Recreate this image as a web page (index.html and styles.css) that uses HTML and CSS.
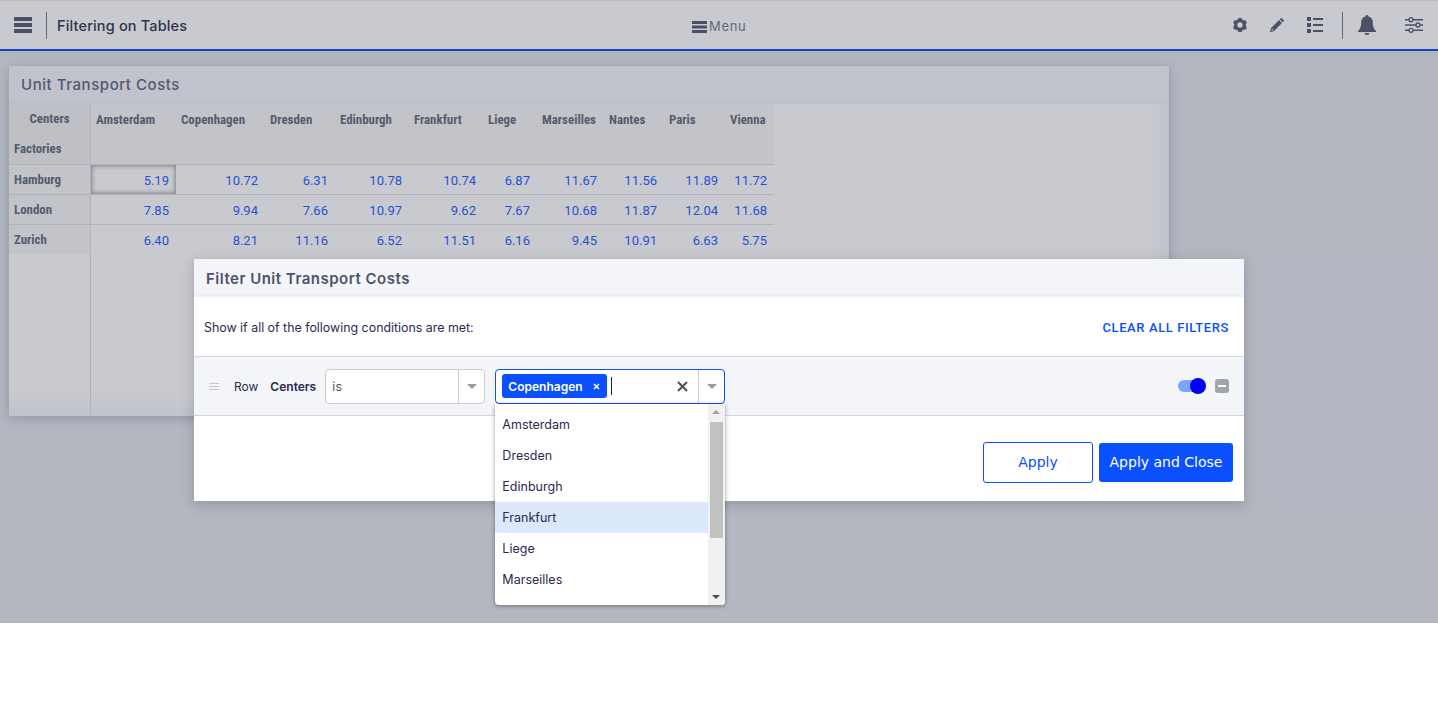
FILE: index.html
```html
<!DOCTYPE html>
<html lang="en">

<head>
    <meta charset="UTF-8">
    <title>Filtering on Tables</title>
    <link rel="stylesheet" href="styles.css">
</head>

<body>
    <div class="app">
        <!-- top bar -->
        <header class="topbar">
            <div class="topbar-left">
                <svg class="icon-bars" width="18" height="16" viewBox="0 0 18 16"><path d="M0 0h18v4H0zM0 6h18v4H0zM0 12h18v4H0z"/></svg>
                <span class="divider"></span>
                <span class="app-title">Filtering on Tables</span>
            </div>
            <div class="topbar-menu">
                <svg width="15" height="12" viewBox="0 0 15 12"><path d="M0 0h15v3H0zM0 4.500h15v3H0zM0 9h15v3H0z"/></svg>
                <span>Menu</span>
            </div>
            <div class="topbar-right">
                <svg class="tool-gear" width="16" height="16" viewBox="0 0 16 16">
                    <circle class="gear-ring" cx="8" cy="8" r="4.300"/>
                    <rect x="6.200" y="1" width="3.600" height="3"/>
                    <rect x="6.200" y="1" width="3.600" height="3" transform="rotate(60 8 8)"/>
                    <rect x="6.200" y="1" width="3.600" height="3" transform="rotate(120 8 8)"/>
                    <rect x="6.200" y="1" width="3.600" height="3" transform="rotate(180 8 8)"/>
                    <rect x="6.200" y="1" width="3.600" height="3" transform="rotate(240 8 8)"/>
                    <rect x="6.200" y="1" width="3.600" height="3" transform="rotate(300 8 8)"/>
                </svg>
                <svg class="tool-pencil" width="16" height="16" viewBox="0 0 16 16"><path d="M12.300.8l2.900 2.900-1.500 1.500-2.900-2.900zM10 3.100L13 6l-8.200 8.200-3.900 1 1-3.900zM3 11.500l-.6 2.200 2.200-.6z"/></svg>
                <svg class="tool-list" width="16" height="16" viewBox="0 0 16 16"><path d="M0 0h4v4H0zM0 6h4v4H0zM0 12h4v4H0zM6 1h10v2H6zM6 7h10v2H6zM6 13h10v2H6z"/></svg>
                <span class="divider"></span>
                <svg class="tool-bell" width="20" height="20" viewBox="0 0 20 20"><path d="M10 0a1.500 1.500 0 0 1 1.500 1.600C14.300 2.300 15.800 4.500 15.800 7.500c0 4.500 1 6.200 3.200 8.500v1H1v-1c2.200-2.300 3.200-4 3.200-8.500 0-3 1.500-5.200 4.300-5.900A1.500 1.500 0 0 1 10 0zM7.500 18h5a2.500 2 0 0 1-5 0z"/></svg>
                <svg class="tool-sliders" width="18" height="16" viewBox="0 0 18 16"><path d="M0 2h4v1.400H0zM8 2h10v1.400H8zM0 7.300h11v1.400H0zM15 7.300h3v1.400h-3zM0 12.600h4v1.400H0zM8 12.600h10v1.400H8z"/><g><circle cx="6" cy="2.700" r="2"/><circle cx="13" cy="8" r="2"/><circle cx="6" cy="13.300" r="2"/></g></svg>
            </div>
        </header>

        <main class="content">
            <section class="panel">
                <h2 class="panel-title">Unit Transport Costs</h2>
                <div class="panel-body">
                    <table class="costs">
                        <colgroup>
                            <col class="w82"><col class="w85"><col class="w89"><col class="w70"><col class="w74"><col class="w74"><col class="w54"><col class="w67"><col class="w60"><col class="w61"><col class="w49">
                        </colgroup>
                        <thead>
                            <tr class="head-top">
                                <th class="corner center">Centers</th>
                                <th>Amsterdam</th><th>Copenhagen</th><th>Dresden</th><th>Edinburgh</th><th>Frankfurt</th><th>Liege</th><th>Marseilles</th><th>Nantes</th><th>Paris</th><th>Vienna</th>
                            </tr>
                            <tr class="head-bottom">
                                <th class="corner">Factories</th>
                                <th colspan="10"></th>
                            </tr>
                        </thead>
                        <tbody>
                            <tr>
                                <th>Hamburg</th>
                                <td class="focused">5.19</td><td>10.72</td><td>6.31</td><td>10.78</td><td>10.74</td><td>6.87</td><td>11.67</td><td>11.56</td><td>11.89</td><td>11.72</td>
                            </tr>
                            <tr>
                                <th>London</th>
                                <td>7.85</td><td>9.94</td><td>7.66</td><td>10.97</td><td>9.62</td><td>7.67</td><td>10.68</td><td>11.87</td><td>12.04</td><td>11.68</td>
                            </tr>
                            <tr>
                                <th>Zurich</th>
                                <td>6.40</td><td>8.21</td><td>11.16</td><td>6.52</td><td>11.51</td><td>6.16</td><td>9.45</td><td>10.91</td><td>6.63</td><td>5.75</td>
                            </tr>
                        </tbody>
                    </table>
                </div>
            </section>
        </main>

        <div class="overlay"></div>

        <!-- filter dialog -->
        <div class="modal">
            <h2 class="modal-title">Filter Unit Transport Costs</h2>
            <div class="modal-intro">
                <span>Show if all of the following conditions are met:</span>
                <a class="clear-all" href="#">CLEAR ALL FILTERS</a>
            </div>
            <div class="condition">
                <svg class="drag" width="10" height="7" viewBox="0 0 10 7"><path d="M0 0h10v1H0zM0 3h10v1H0zM0 6h10v1H0z"/></svg>
                <span class="cond-label">Row</span>
                <strong class="cond-field">Centers</strong>
                <div class="select">
                    <span class="select-value">is</span>
                    <span class="select-arrow"><i class="caret"></i></span>
                </div>
                <div class="multi">
                    <div class="multi-values">
                        <span class="chip">Copenhagen<svg width="7" height="7" viewBox="0 0 7 7"><path d="M1 1l5 5M6 1L1 6"/></svg></span>
                        <span class="text-caret"></span>
                    </div>
                    <svg class="multi-clear" width="11" height="11" viewBox="0 0 11 11"><path d="M1 1l9 9M10 1l-9 9"/></svg>
                    <span class="select-arrow"><i class="caret"></i></span>
                    <div class="dropdown">
                        <ul class="options">
                            <li>Amsterdam</li>
                            <li>Dresden</li>
                            <li>Edinburgh</li>
                            <li class="active">Frankfurt</li>
                            <li>Liege</li>
                            <li>Marseilles</li>
                        </ul>
                        <div class="scrollbar">
                            <i class="scroll-up"></i>
                            <b class="scroll-thumb"></b>
                            <i class="scroll-down"></i>
                        </div>
                    </div>
                </div>
                <span class="toggle"><i></i></span>
                <span class="remove"><i></i></span>
            </div>
            <div class="modal-footer">
                <button class="btn btn-outline">Apply</button>
                <button class="btn btn-primary">Apply and Close</button>
            </div>
        </div>
    </div>
</body>

</html>
```

FILE: styles.css
```css
* {
    margin: 0;
    padding: 0;
    box-sizing: border-box;
}

body {
    background-color: #fff;
    font-family: "Inter", "Liberation Sans", sans-serif;
}

.app {
    position: relative;
    height: 623px;
    overflow: hidden;
    background-color: #e3e6ec;
}

.overlay {
    position: absolute;
    top: 0;
    right: 0;
    bottom: 0;
    left: 0;
    background-color: rgba(30, 35, 55, .24);
}

/* top bar */
.topbar {
    position: relative;
    height: 51px;
    display: flex;
    align-items: center;
    justify-content: space-between;
    background-color: #fff;
    border-top: 1px solid #ececec;
    border-bottom: 2px solid #0a50ff;
    color: #333b50;
}

.topbar svg {
    fill: #5a6073;
    display: block;
}

.divider {
    display: block;
    width: 1px;
    height: 27px;
    background-color: #7a7f8e;
}

.topbar-left {
    display: flex;
    align-items: center;
    padding-left: 14px;
}

.topbar-left .divider {
    margin: 0 10px 0 14px;
}

.app-title {
    font-size: 14.500px;
    font-weight: 500;
    letter-spacing: .15px;
}

.topbar-menu {
    position: absolute;
    left: 692px;
    top: 19px;
    display: flex;
    align-items: center;
    gap: 2px;
    font-size: 13px;
    letter-spacing: .7px;
    color: #7a7f8e;
}

.topbar-menu span {
    margin-top: -2px;
}

.topbar-right {
    display: flex;
    align-items: center;
    padding-right: 15px;
}

.tool-gear {
    margin-right: 21px;
}

.topbar svg .gear-ring {
    fill: none;
    stroke: #5a6073;
    stroke-width: 3.200;
}

.tool-pencil {
    margin-right: 22px;
}

.tool-list {
    margin-right: 19px;
}

.tool-bell {
    margin: 0 28px 0 14px;
}

.tool-sliders circle {
    stroke: #5a6073;
    stroke-width: 1.300;
    fill: none;
}

/* background panel */
.content {
    padding: 15px 9px;
}

.panel {
    width: 1160px;
    height: 350px;
    display: flex;
    flex-direction: column;
    background-color: #fff;
    box-shadow: 0 2px 10px rgba(40, 45, 70, .25);
}

.panel-title {
    height: 38px;
    padding: 9px 12px 0;
    background-color: #f3f6fc;
    border-bottom: 3px solid #edf0f6;
    font-size: 15px;
    font-weight: 500;
    letter-spacing: .55px;
    color: #656c80;
}

.panel-body {
    flex: 1;
    background:
        linear-gradient(#dfe1e7, #dfe1e7) 81px 0 / 1px 100% no-repeat,
        linear-gradient(to bottom, rgba(243, 246, 252, 0), #f3f6fc) 0 100% / 100% 22px no-repeat,
        linear-gradient(to right, rgba(243, 246, 252, 0), #f3f6fc) 100% 0 / 20px 100% no-repeat,
        #fff;
}

.costs {
    width: 765px;
    table-layout: fixed;
    border-collapse: separate;
    border-spacing: 0;
}

.w82 { width: 82px; }
.w85 { width: 85px; }
.w89 { width: 89px; }
.w70 { width: 70px; }
.w74 { width: 74px; }
.w54 { width: 54px; }
.w67 { width: 67px; }
.w60 { width: 60px; }
.w61 { width: 61px; }
.w49 { width: 49px; }

.costs th {
    font-family: "Roboto", sans-serif;
    font-stretch: 75%;
    font-size: 12.900px;
    font-weight: 700;
    text-align: left;
    color: #686f80;
    background-color: #f7f7f7;
    padding: 0 5px;
    white-space: nowrap;
}

.costs .corner {
    background-color: #f2f2f2;
    border-right: 1px solid #dfe1e7;
    padding-bottom: 2px;
}

.costs .center {
    text-align: center;
}

.head-top th {
    height: 31px;
}

.head-bottom th {
    height: 30px;
    border-bottom: 1px solid #dfe1e7;
}

.costs tbody tr {
    height: 30px;
}

.costs tbody tr:last-child {
    height: 29px;
}

.costs tbody th,
.costs td {
    border-bottom: 1px solid #dfe1e7;
}

.costs tbody tr:last-child th,
.costs tbody tr:last-child td {
    border-bottom: 0;
}

.costs tbody th {
    border-right: 1px solid #dfe1e7;
}

.costs td {
    font-family: "Roboto", sans-serif;
    font-size: 13px;
    text-align: right;
    padding: 2px 7px 0 0;
    color: #2a62ff;
}

.costs .focused {
    box-shadow: inset 0 0 4px 1px rgba(60, 60, 70, .5);
}

/* dialog */
.modal {
    position: absolute;
    left: 194px;
    top: 259px;
    width: 1050px;
    height: 242px;
    background-color: #fff;
    box-shadow: 0 3px 12px rgba(40, 45, 70, .25);
}

.modal-title {
    height: 38px;
    padding: 10px 12px 0;
    background-color: #f3f5f9;
    border-bottom: 3px solid #eef0f4;
    font-size: 15px;
    font-weight: 600;
    letter-spacing: .5px;
    color: #4c5368;
}

.modal-intro {
    height: 59px;
    display: flex;
    align-items: center;
    justify-content: space-between;
    padding: 2px 15px 0 10px;
    font-size: 12.400px;
    color: #2b2a50;
}

.clear-all {
    font-family: "Roboto", sans-serif;
    font-size: 13px;
    font-weight: 500;
    letter-spacing: .6px;
    color: #0a50ff;
    text-decoration: none;
}

.condition {
    height: 60px;
    display: flex;
    align-items: center;
    padding: 0 15px;
    background-color: #f3f5f9;
    border-top: 1px solid #d5d6db;
    border-bottom: 1px solid #d5d6db;
    font-size: 12px;
    color: #2b2a50;
}

.drag {
    fill: #c4c6cc;
    margin-right: 15px;
}

.cond-label {
    margin-right: 12px;
}

.cond-field {
    font-weight: 600;
    width: 55px;
}

.select,
.multi {
    height: 35px;
    display: flex;
    align-items: stretch;
    background-color: #fff;
    border-radius: 4px;
}

.select {
    width: 160px;
    border: 1px solid #ccc;
    margin-right: 10px;
}

.select-value {
    flex: 1;
    align-self: center;
    padding: 1px 0 0 6px;
    font-size: 12.500px;
    color: #555;
}

.select-arrow {
    width: 26px;
    display: flex;
    align-items: center;
    justify-content: center;
    border-left: 1px solid #ccc;
}

.caret {
    width: 0;
    height: 0;
    border-left: 5px solid transparent;
    border-right: 5px solid transparent;
    border-top: 5px solid #999;
}

.multi {
    position: relative;
    width: 230px;
    border: 1px solid #0a50ff;
}

.multi-values {
    flex: 1;
    display: flex;
    align-items: center;
    padding-left: 6px;
}

.chip {
    width: 105px;
    height: 24px;
    display: flex;
    align-items: center;
    justify-content: space-between;
    padding: 0 7px 0 6px;
    background-color: #0a50ff;
    border-radius: 3px;
    font-size: 12px;
    font-weight: 600;
    color: #fff;
}

.chip svg {
    stroke: #fff;
    stroke-width: 1.500;
}

.text-caret {
    width: 1px;
    height: 18px;
    margin-left: 4px;
    background-color: #222;
}

.multi-clear {
    align-self: center;
    margin-right: 10px;
    stroke: #555;
    stroke-width: 2.200;
}

.dropdown {
    position: absolute;
    left: -1px;
    top: 34px;
    width: 230px;
    height: 201px;
    display: flex;
    background-color: #fff;
    border-radius: 0 0 4px 4px;
    box-shadow: 0 1px 4px rgba(0, 0, 0, .4);
    overflow: hidden;
}

.options {
    flex: 1;
    list-style: none;
    padding-top: 5px;
}

.options li {
    height: 31px;
    line-height: 31px;
    padding-left: 7px;
    font-size: 12.500px;
    color: #2b2a50;
}

.options .active {
    background-color: #dce9fd;
}

.scrollbar {
    width: 17px;
    position: relative;
    background-color: #f1f1f1;
}

.scroll-thumb {
    position: absolute;
    left: 2px;
    top: 18px;
    width: 13px;
    height: 116px;
    background-color: #c1c1c1;
}

.scroll-up,
.scroll-down {
    position: absolute;
    left: 4px;
    width: 0;
    height: 0;
    border-left: 4px solid transparent;
    border-right: 4px solid transparent;
}

.scroll-up {
    top: 6px;
    border-bottom: 4px solid #a3a3a3;
}

.scroll-down {
    bottom: 6px;
    border-top: 4px solid #505050;
}

.toggle {
    position: relative;
    width: 27px;
    height: 12px;
    margin-left: auto;
    margin-right: 10px;
    background-color: #7fa4ff;
    border-radius: 6px;
}

.toggle i {
    position: absolute;
    right: -1px;
    top: -2px;
    width: 16px;
    height: 16px;
    background-color: #0000f5;
    border-radius: 50%;
}

.remove {
    width: 14px;
    height: 14px;
    display: flex;
    align-items: center;
    justify-content: center;
    background-color: #a3a5ad;
    border-radius: 3px;
}

.remove i {
    width: 8px;
    height: 2px;
    background-color: #fff;
}

.modal-footer {
    height: 85px;
    display: flex;
    align-items: center;
    justify-content: flex-end;
    gap: 6px;
    padding: 7px 11px 0 0;
}

.btn {
    font-family: "DejaVu Sans", sans-serif;
    font-size: 14px;
    border-radius: 3px;
}

.btn-outline {
    width: 110px;
    height: 41px;
    background-color: #fff;
    border: 1px solid #0a50ff;
    color: #0a50ff;
}

.btn-primary {
    width: 134px;
    height: 39px;
    background-color: #0a50ff;
    border: 0;
    color: #fff;
}
```
